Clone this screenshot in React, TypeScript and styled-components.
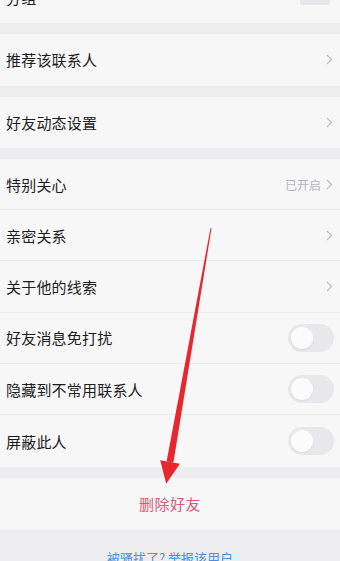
import styled, { createGlobalStyle } from "styled-components";

const GlobalStyle = createGlobalStyle`
  html, body {
    margin: 0;
    padding: 0;
    background: #ededf0;
    font-family: "Noto Sans CJK SC", "Noto Sans", sans-serif;
  }
`;

type Item = { label: string; right?: "chevron" | "switch" | "status"; status?: string };

const mainItems: Item[] = [
  { label: "特别关心", right: "status", status: "已开启" },
  { label: "亲密关系", right: "chevron" },
  { label: "关于他的线索", right: "chevron" },
  { label: "好友消息免打扰", right: "switch" },
  { label: "隐藏到不常用联系人", right: "switch" },
  { label: "屏蔽此人", right: "switch" },
];

function Chevron() {
  return (
    <svg width="7" height="11" viewBox="0 0 7 11">
      <path d="M1 1l4.5 4.5L1 10" fill="none" stroke="#c2c2c6" strokeWidth="1.3" />
    </svg>
  );
}

function RightSide({ item }: { item: Item }) {
  if (item.right === "switch") {
    return (
      <Switch>
        <Knob />
      </Switch>
    );
  }
  return (
    <RightBox>
      {item.status && <Status>{item.status}</Status>}
      <Chevron />
    </RightBox>
  );
}

function App() {
  return (
    <Screen>
      <GlobalStyle />
      <List>
        <Group>
          <Row>
            <Label>分组</Label>
            <GroupTag />
          </Row>
        </Group>
        <Group>
          <Row>
            <Label>推荐该联系人</Label>
            <RightBox>
              <Chevron />
            </RightBox>
          </Row>
        </Group>
        <Group>
          <Row>
            <Label>好友动态设置</Label>
            <RightBox>
              <Chevron />
            </RightBox>
          </Row>
        </Group>
        <Group>
          {mainItems.map((item) => (
            <Row key={item.label} $divided>
              <Label>{item.label}</Label>
              <RightSide item={item} />
            </Row>
          ))}
        </Group>
        <Group>
          <DeleteRow>删除好友</DeleteRow>
        </Group>
        <Report>被骚扰了? 举报该用户</Report>
      </List>
      <Arrow viewBox="0 0 340 561">
        <polygon
          points="210.5,228 211.5,228.2 173.4,462.6 166.6,461.4"
          fill="#e8262f"
        />
        <polygon
          points="160.2,460.3 179.9,463.7 166.2,483.7"
          fill="#e8262f"
        />
      </Arrow>
    </Screen>
  );
}
export default App;

const Screen = styled.div`
  position: relative;
  width: 340px;
  height: 561px;
  overflow: hidden;
  background: #ededf0;
`;

const List = styled.div`
  display: flex;
  flex-direction: column;
  gap: 11px;
  margin-top: -28px;
`;

const Group = styled.div`
  display: flex;
  flex-direction: column;
  background: #f7f7f8;
`;

const Row = styled.div<{ $divided?: boolean }>`
  display: flex;
  align-items: center;
  justify-content: space-between;
  box-sizing: border-box;
  height: 51.3px;
  padding: 0 6px;
  border-bottom: ${(p) => (p.$divided ? "1px solid #ececee" : "none")};

  &:last-child {
    border-bottom: none;
  }
`;

const Label = styled.span`
  font-size: 15px;
  color: #1c1c1e;
  letter-spacing: 0.2px;
`;

const RightBox = styled.div`
  display: flex;
  align-items: center;
  gap: 5px;
  padding-right: 1px;
`;

const Status = styled.span`
  font-size: 12px;
  color: #b6b6ba;
`;

const GroupTag = styled.div`
  align-self: flex-end;
  width: 30px;
  height: 33px;
  margin-right: 4px;
  margin-bottom: 18px;
  background: #e6e6e8;
  border-radius: 2px;
`;

const Switch = styled.div`
  display: flex;
  align-items: center;
  box-sizing: border-box;
  width: 46px;
  height: 28px;
  padding: 0 3px;
  border-radius: 14px;
  background: #e8e8eb;
`;

const Knob = styled.div`
  width: 22px;
  height: 22px;
  border-radius: 50%;
  background: #fbfbfc;
  box-shadow: 0 1px 2px rgba(0, 0, 0, 0.06);
`;

const DeleteRow = styled.div`
  display: flex;
  align-items: center;
  justify-content: center;
  height: 52px;
  font-size: 15px;
  color: #dd5876;
  letter-spacing: 0.5px;
`;

const Report = styled.div`
  margin-top: 7px;
  text-align: center;
  font-size: 13px;
  color: #4a8ee0;
`;

const Arrow = styled.svg`
  position: absolute;
  top: 0;
  left: 0;
  width: 340px;
  height: 561px;
  pointer-events: none;
`;
